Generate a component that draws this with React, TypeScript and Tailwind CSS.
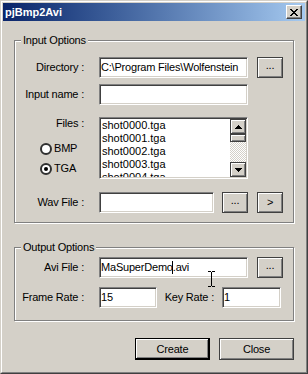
import React from 'react';

const sunken =
  'h-[21px] bg-white border border-t-[#808080] border-l-[#808080] border-r-white border-b-white shadow-[inset_1px_1px_0_#404040,inset_-1px_-1px_0_#d4d0c8] flex items-center pl-[1px] overflow-hidden whitespace-nowrap';
const raised =
  'bg-[#d4d0c8] border border-[#404040] shadow-[inset_1px_1px_0_#fff,inset_-1px_-1px_0_#808080] flex items-center justify-center';

const closeRows = ['xx....xx', '.xx..xx.', '..xxxx..', '...xx...', '..xxxx..', '.xx..xx.', 'xx....xx'];

const CloseGlyph = () => (
  <svg width="8" height="7" viewBox="0 0 8 7">
    {closeRows.flatMap((row, y) =>
      row.split('').map((c, x) => (c === 'x' ? <rect key={`${x}-${y}`} x={x} y={y} width="1" height="1" fill="#000" /> : null))
    )}
  </svg>
);

const Radio = ({ checked }: { checked?: boolean }) => (
  <svg width="12" height="12" viewBox="0 0 12 12">
    <circle cx="6" cy="6" r="5" fill="#fff" stroke="#303030" strokeWidth="2" />
    {checked && <circle cx="6" cy="6" r="2" fill="#000" />}
  </svg>
);

const ArrowUp = () => (
  <svg width="7" height="4" viewBox="0 0 7 4">
    <path d="M3 0h1v1h1v1h1v1h1v1H0V3h1V2h1V1h1z" fill="#000" />
  </svg>
);

const ArrowDown = () => (
  <svg width="7" height="4" viewBox="0 0 7 4">
    <path d="M0 0h7v1H6v1H5v1H4v1H3V3H2V2H1V1H0z" fill="#000" />
  </svg>
);

const IBeam = () => (
  <svg width="7" height="16" viewBox="0 0 7 16">
    <rect x="0" y="0" width="3" height="1" fill="#000" />
    <rect x="4" y="0" width="3" height="1" fill="#000" />
    <rect x="3" y="1" width="1" height="14" fill="#000" />
    <rect x="0" y="15" width="3" height="1" fill="#000" />
    <rect x="4" y="15" width="3" height="1" fill="#000" />
  </svg>
);

const files = ['shot0000.tga', 'shot0001.tga', 'shot0002.tga', 'shot0003.tga', 'shot0004.tga'];

const Label = ({ children, w = 'w-[69px]' }: { children: React.ReactNode; w?: string }) => (
  <span className={`${w} text-right shrink-0`}>{children}</span>
);

export default function App() {
  return (
    <div className="w-[308px] h-[374px] bg-[#d4d0c8] border border-t-[#d4d0c8] border-l-[#d4d0c8] border-r-[#404040] border-b-[#404040] font-['Liberation_Sans',Arial,sans-serif] text-[11px] text-black select-none">
      <div className="h-full border border-t-white border-l-white border-r-[#808080] border-b-[#808080] p-[1px]">
        {/* title bar */}
        <div className="h-[18px] flex items-center bg-linear-to-r from-[#0a246a] to-[#a6caf0] pl-[2px] pr-[3px]">
          <span className="flex-1 text-white font-bold text-[11px] leading-[18px]">pjBmp2Avi</span>
          <div className="w-[16px] h-[14px] bg-[#d4d0c8] border border-t-white border-l-white border-r-[#404040] border-b-[#404040] shadow-[inset_-1px_-1px_0_#808080] flex items-center justify-center">
            <CloseGlyph />
          </div>
        </div>

        <div className="tracking-[-0.2px]">
          {/* Input Options */}
          <fieldset className="ml-[11px] mt-[13px] w-[280px] border border-[#808080] shadow-[inset_1px_1px_0_#fff,1px_1px_0_#fff] px-0 pt-[10px] pb-[9px]">
            <legend className="ml-[6px] px-[2px] leading-[13px] bg-[#d4d0c8]">Input Options</legend>

            <div className="flex items-center h-[21px]">
              <Label>Directory :</Label>
              <div className={`${sunken} ml-[15px] w-[149px]`}>C:\Program Files\Wolfenstein</div>
              <div className={`${raised} ml-[9px] w-[26px] h-[21px] items-end pb-[4px]`}>...</div>
            </div>

            <div className="flex items-center h-[21px] mt-[6px]">
              <Label>Input name :</Label>
              <div className={`${sunken} ml-[15px] w-[149px]`} />
            </div>

            <div className="flex mt-[12px]">
              <div className="w-[69px] shrink-0 flex flex-col">
                <span className="text-right leading-[13px]">Files :</span>
                <div className="flex items-center gap-[2px] pl-[25px] mt-[12px] h-[13px]">
                  <Radio />
                  <span>BMP</span>
                </div>
                <div className="flex items-center gap-[2px] pl-[25px] mt-[7px] h-[13px]">
                  <Radio checked />
                  <span>TGA</span>
                </div>
              </div>
              <div className="ml-[15px] w-[149px] h-[62px] bg-white border border-t-[#808080] border-l-[#808080] border-r-white border-b-white shadow-[inset_1px_1px_0_#404040,inset_-1px_-1px_0_#d4d0c8] p-[1px] flex">
                <div className="flex-1 overflow-hidden pl-[1px] tracking-normal">
                  {files.map((f) => (
                    <div key={f} className="leading-[13px] whitespace-nowrap">
                      {f}
                    </div>
                  ))}
                </div>
                <div className="w-[16px] flex flex-col">
                  <div className={`${raised} h-[15px]`}>
                    <ArrowUp />
                  </div>
                  <div className={`${raised} h-[8px]`} />
                  <div className="flex-1 bg-[repeating-conic-gradient(#fff_0%_25%,#d4d0c8_0%_50%)] [background-size:2px_2px]" />
                  <div className={`${raised} h-[15px]`}>
                    <ArrowDown />
                  </div>
                </div>
              </div>
            </div>

            <div className="flex items-center h-[21px] mt-[13px]">
              <Label>Wav File :</Label>
              <div className={`${sunken} ml-[15px] w-[115px]`} />
              <div className={`${raised} ml-[8px] w-[26px] h-[21px] items-end pb-[4px]`}>...</div>
              <div className={`${raised} ml-[9px] w-[26px] h-[21px]`}>&gt;</div>
            </div>
          </fieldset>

          {/* Output Options */}
          <fieldset className="ml-[11px] mt-[18px] w-[280px] border border-[#808080] shadow-[inset_1px_1px_0_#fff,1px_1px_0_#fff] px-0 pt-[3px] pb-[12px]">
            <legend className="ml-[6px] px-[2px] leading-[13px] bg-[#d4d0c8]">Output Options</legend>

            <div className="flex items-center h-[21px]">
              <Label>Avi File :</Label>
              <div className="relative ml-[15px] w-[149px]">
                <div className={sunken}>
                  <span>MaSuperDemo</span>
                  <span className="inline-block w-px h-[13px] bg-black -ml-px" />
                  <span>.avi</span>
                </div>
                <div className="absolute left-[109px] top-[14px]">
                  <IBeam />
                </div>
              </div>
              <div className={`${raised} ml-[9px] w-[26px] h-[21px] items-end pb-[4px]`}>...</div>
            </div>

            <div className="flex items-center h-[21px] mt-[9px]">
              <Label>Frame Rate :</Label>
              <div className={`${sunken} ml-[15px] w-[58px]`}>15</div>
              <Label w="w-[57px]">Key Rate :</Label>
              <div className={`${sunken} ml-[8px] w-[59px]`}>1</div>
            </div>
          </fieldset>

          {/* dialog buttons */}
          <div className="flex justify-end gap-[9px] mt-[17px] pr-[11px]">
            <div className="w-[75px] h-[22px] bg-[#d4d0c8] border border-black shadow-[inset_-1px_-1px_0_#000,inset_1px_1px_0_#fff,inset_-2px_-2px_0_#808080] flex items-center justify-center">
              Create
            </div>
            <div className={`${raised} w-[75px] h-[22px]`}>Close</div>
          </div>
        </div>
      </div>
    </div>
  );
}
